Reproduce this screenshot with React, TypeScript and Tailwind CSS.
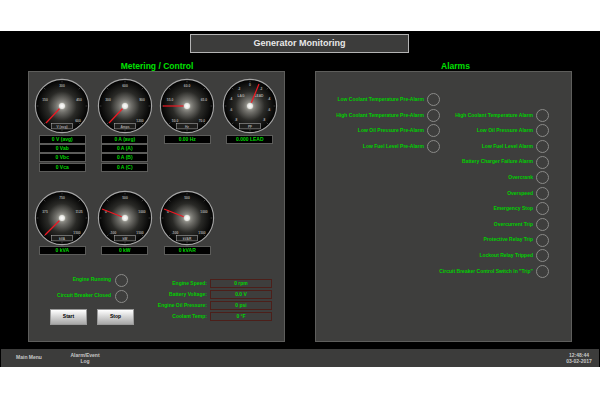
import { useId } from "react";

type Tick = [number, number, string];

function Gauge({ ticks, tip, unit }: { ticks: Tick[]; tip: [number, number]; unit: string }) {
  const id = useId();
  const angles = [0, 45, 90, 135, 180, 225, 270, 315];
  return (
    <svg width="56" height="56" viewBox="-28 -28 56 56" className="block">
      <defs>
        <radialGradient id={id}>
          <stop offset="0%" stopColor="#b4b4ac" />
          <stop offset="25%" stopColor="#6e6d68" />
          <stop offset="55%" stopColor="#2a2a27" />
          <stop offset="100%" stopColor="#000000" />
        </radialGradient>
        <radialGradient id={id + "h"}>
          <stop offset="0%" stopColor="#ffffff" />
          <stop offset="70%" stopColor="#e8e8e4" />
          <stop offset="100%" stopColor="#a8a8a0" />
        </radialGradient>
      </defs>
      <circle r="26.6" fill={`url(#${id})`} stroke="#a6a6a6" strokeWidth="1.1" />
      {angles.map((a) => {
        const r = (a * Math.PI) / 180;
        return (
          <line
            key={a}
            x1={Math.sin(r) * 23.6}
            y1={-Math.cos(r) * 23.6}
            x2={Math.sin(r) * 25.6}
            y2={-Math.cos(r) * 25.6}
            stroke="#8c8c8c"
            strokeWidth="0.4"
          />
        );
      })}
      {ticks.map(([x, y, t]) => (
        <text key={t + x} x={x} y={y + 1.2} textAnchor="middle" fontSize="3.3" fontFamily="'Liberation Sans', sans-serif" fontWeight="700" fill="#a8a8a8">
          {t}
        </text>
      ))}
      <rect x="-10.5" y="17.5" width="21" height="5.4" fill="#1e1e1c" stroke="#bdbdbd" strokeWidth="0.5" />
      <text x="0" y="21.6" textAnchor="middle" fontSize="3.3" fontFamily="'Liberation Sans', sans-serif" fontWeight="700" fill="#a8a8a8">
        {unit}
      </text>
      <line x1="0" y1="0" x2={tip[0]} y2={tip[1]} stroke="#f01822" strokeWidth="1.2" />
      <circle r="3.5" fill={`url(#${id + "h"})`} />
    </svg>
  );
}

function Val({ children }: { children: string }) {
  return (
    <div className="h-[9px] w-[47px] border border-[#5c5c5a] bg-black text-center text-[5px] leading-[7px] font-bold text-[#00d800]">
      {children}
    </div>
  );
}

function Lamp() {
  return <div className="h-[13px] w-[13px] shrink-0 rounded-full border border-[#8a8a88]" />;
}

function LampRow({ label }: { label: string }) {
  return (
    <div className="flex h-[15.6px] items-center justify-end gap-[3px]">
      <span className="text-[5px] font-bold whitespace-nowrap text-[#00d000]">{label}</span>
      <Lamp />
    </div>
  );
}

function Readout({ label, value }: { label: string; value: string }) {
  return (
    <div className="flex h-[11px] items-center justify-end gap-[3px]">
      <span className="text-[5px] font-bold whitespace-nowrap text-[#00d000]">{label}</span>
      <div className="h-[9px] w-[62px] border border-[#4c1f1a] text-center text-[5px] leading-[7px] font-bold text-[#00d800]">
        {value}
      </div>
    </div>
  );
}

const preAlarms = [
  "Low Coolant Temperature Pre-Alarm",
  "High Coolant Temperature Pre-Alarm",
  "Low Oil Pressure Pre-Alarm",
  "Low Fuel Level Pre-Alarm",
];

const alarms = [
  "High Coolant Temperature Alarm",
  "Low Oil Pressure Alarm",
  "Low Fuel Level Alarm",
  "Battery Charger Failure Alarm",
  "Overcrank",
  "Overspeed",
  "Emergency Stop",
  "Overcurrent Trip",
  "Protective Relay Trip",
  "Lockout Relay Tripped",
  'Circuit Breaker Control Switch In "Trip"',
];

export default function App() {
  return (
    <div className="h-[400px] w-[600px] overflow-hidden bg-white font-['Liberation_Sans',Arial,sans-serif]">
      <div className="h-[31px]" />
      <main className="flex h-[336px] flex-col bg-black">
        <div className="mt-[3px] ml-[190px] flex h-[19px] w-[219px] items-center justify-center border border-[#b4b4b4] bg-[#3c3c3b] text-[9px] font-bold text-[#e8e8e8]">
          Generator Monitoring
        </div>

        <div className="mt-[8px] flex gap-[30px] pl-[28px]">
          <section className="w-[257px]">
            <h2 className="h-[10px] pl-[1px] text-center text-[8.5px] leading-[10px] font-bold text-[#00e000]">Metering / Control</h2>
            <div className="h-[271px] border border-[#5e5e5c] bg-[#3e3e3d] pt-[6px] pl-[2px]">
              <div className="grid h-[112px] grid-cols-[repeat(4,62.5px)]">
                <div className="flex flex-col items-center">
                  <Gauge unit="V (avg)" tip={[-16, 17]} ticks={[[0, -20, "300"], [-17, -6, "150"], [17, -6, "450"], [16, 14.5, "600"]]} />
                  <div className="mt-[0.5px] flex flex-col gap-[0.4px]">
                    <Val>0 V (avg)</Val>
                    <Val>0 Vab</Val>
                    <Val>0 Vbc</Val>
                    <Val>0 Vca</Val>
                  </div>
                </div>
                <div className="flex flex-col items-center">
                  <Gauge unit="Amps" tip={[-16, 17]} ticks={[[0, -20, "600"], [-17, -6, "300"], [17, -6, "900"], [15, 14.5, "1200"]]} />
                  <div className="mt-[0.5px] flex flex-col gap-[0.4px]">
                    <Val>0 A (avg)</Val>
                    <Val>0 A (A)</Val>
                    <Val>0 A (B)</Val>
                    <Val>0 A (C)</Val>
                  </div>
                </div>
                <div className="flex flex-col items-center">
                  <Gauge unit="Hz" tip={[-24, 0]} ticks={[[0, -20, "60.0"], [-17, -6, "55.0"], [17, -6, "65.0"], [-12, 14.5, "50.0"], [15, 14.5, "70.0"]]} />
                  <div className="mt-[0.5px]">
                    <Val>0.00 Hz</Val>
                  </div>
                </div>
                <div className="flex flex-col items-center">
                  <Gauge unit="PF" tip={[9, -22]} ticks={[[-9, -10, "LAG"], [9, -10, "LEAD"], [0, -21, "0"], [-11, -17, ".2"], [11, -17, ".2"], [-19, -7, ".4"], [19, -7, ".4"], [-19, 4, ".6"], [19, 4, ".6"], [-14, 14, ".8"], [14, 14, ".8"]]} />
                  <div className="mt-[0.5px]">
                    <Val>0.000 LEAD</Val>
                  </div>
                </div>
              </div>

              <div className="grid grid-cols-[repeat(4,62.5px)]">
                <div className="flex flex-col items-center">
                  <Gauge unit="kVA" tip={[-17, 17]} ticks={[[0, -20, "750"], [-17, -6, "375"], [17, -6, "1125"], [15, 14.5, "1500"]]} />
                  <Val>0 kVA</Val>
                </div>
                <div className="flex flex-col items-center">
                  <Gauge unit="kW" tip={[-23, -9]} ticks={[[0, -20, "500"], [-19, -6, "0"], [17, -6, "1000"], [-12, 14.5, "-500"], [15, 14.5, "1500"]]} />
                  <Val>0 kW</Val>
                </div>
                <div className="flex flex-col items-center">
                  <Gauge unit="kVAR" tip={[-23, -9]} ticks={[[0, -20, "500"], [-19, -6, "0"], [17, -6, "1000"], [-12, 14.5, "-500"], [15, 14.5, "1500"]]} />
                  <Val>0 kVAR</Val>
                </div>
              </div>

              <div className="mt-[17px] flex">
                <div className="w-[105px]">
                  <div className="flex h-[16px] items-center justify-end gap-[4px] pr-[8px]">
                    <span className="text-[5px] font-bold text-[#00d000]">Engine Running</span>
                    <Lamp />
                  </div>
                  <div className="flex h-[16px] items-center justify-end gap-[4px] pr-[8px]">
                    <span className="text-[5px] font-bold text-[#00d000]">Circuit Breaker Closed</span>
                    <Lamp />
                  </div>
                  <div className="mt-[5px] flex justify-end gap-[10px] pr-[2px]">
                    <button className="h-[16px] w-[37px] border border-[#9a9a9a] bg-gradient-to-b from-[#ffffff] to-[#a8a8a8] text-[5px] font-bold text-black">Start</button>
                    <button className="h-[16px] w-[37px] border border-[#9a9a9a] bg-gradient-to-b from-[#ffffff] to-[#a8a8a8] text-[5px] font-bold text-black">Stop</button>
                  </div>
                </div>
                <div className="mt-[6px] w-[136px]">
                  <Readout label="Engine Speed:" value="0 rpm" />
                  <Readout label="Battery Voltage:" value="0.0 V" />
                  <Readout label="Engine Oil Pressure:" value="0 psi" />
                  <Readout label="Coolant Temp:" value="0 °F" />
                </div>
              </div>
            </div>
          </section>

          <section className="w-[257px]">
            <h2 className="h-[10px] pl-[24px] text-center text-[8.5px] leading-[10px] font-bold text-[#00e000]">Alarms</h2>
            <div className="flex h-[271px] border border-[#5e5e5c] bg-[#3e3e3d] pt-[20px]">
              <div className="w-[124px]">
                {preAlarms.map((a) => (
                  <LampRow key={a} label={a} />
                ))}
              </div>
              <div className="mt-[15.6px] w-[109px]">
                {alarms.map((a) => (
                  <LampRow key={a} label={a} />
                ))}
              </div>
            </div>
          </section>
        </div>

        <footer className="mx-px mt-[7px] flex h-[18px] items-center bg-[#3c3c3b] text-[5px] font-bold text-[#c8c8c8]">
          <span className="w-[56px] text-center">Main Menu</span>
          <span className="w-[56px] text-center leading-[6px]">
            Alarm/Event
            <br />
            Log
          </span>
          <span className="ml-auto w-[40px] text-center leading-[6px]">
            12:48:44
            <br />
            03-02-2017
          </span>
        </footer>
      </main>
    </div>
  );
}
